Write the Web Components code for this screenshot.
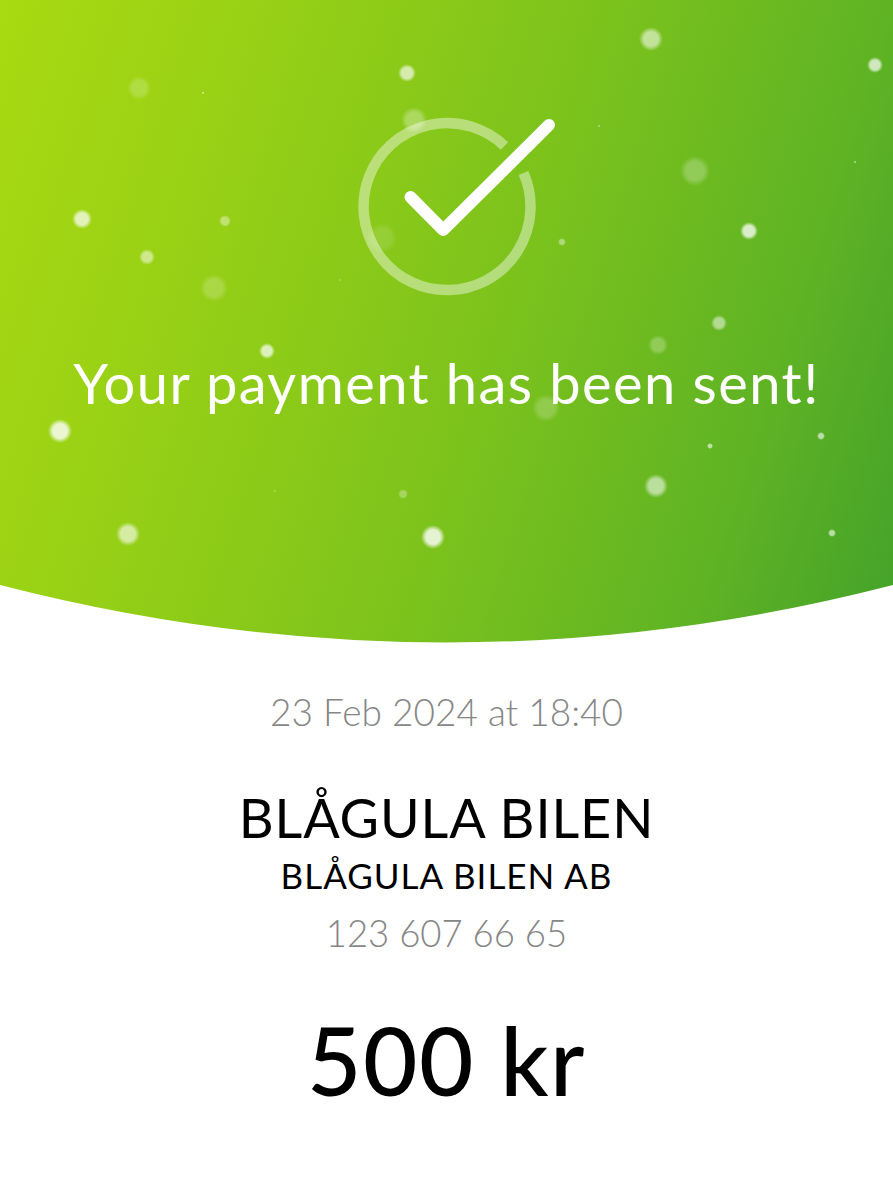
<!DOCTYPE html>
<html>
<head>
<meta charset="utf-8">
<title>Payment sent</title>
<style>
    html, body
    {
        margin: 0;
        padding: 0;
        background: #fff;
    }
</style>
</head>
<body>
<payment-receipt>
    <success-hero>Your payment has been sent!</success-hero>
    <payment-details
        date="23 Feb 2024 at 18:40"
        name="BLÅGULA BILEN"
        company="BLÅGULA BILEN AB"
        number="123 607 66 65"
        amount="500 kr"></payment-details>
</payment-receipt>

<script>
const receiptTemplate = document.createElement('template');
receiptTemplate.innerHTML = `
    <style>
        :host
        {
            display: flex;
            flex-direction: column;
            width: 893px;
            height: 1200px;
            overflow: hidden;
            background: #fff;
            font-family: Lato, "Open Sans", sans-serif;
        }
    </style>
    <slot></slot>
`;

class PaymentReceipt extends HTMLElement
{
    constructor()
    {
        super();
        this.attachShadow({mode: 'open'}).appendChild(receiptTemplate.content.cloneNode(true));
    }
}

// x, y, radius, opacity of each snow flake, read off the screenshot
const FLAKES = [
    [651, 39, 12, .55], [407, 73, 9, .65], [139, 88, 12, .2], [414, 120, 13, .3],
    [82, 219, 10, .7], [225, 221, 6, .4], [147, 257, 8, .5], [214, 288, 14, .2],
    [695, 171, 15, .25], [749, 231, 9, .75], [875, 65, 8, .7], [382, 238, 15, .12],
    [562, 242, 4, .4], [267, 351, 8, .7], [719, 323, 8, .5], [658, 345, 10, .25],
    [60, 431, 12, .8], [546, 408, 14, .2], [710, 446, 3, .6], [821, 436, 4, .6],
    [656, 486, 12, .55], [403, 494, 5, .3], [128, 534, 12, .6], [433, 537, 12, .8],
    [832, 533, 4, .6], [275, 491, 1, .4], [203, 93, 1, .8], [599, 126, 1, .6],
    [855, 162, 1, .7], [340, 280, 1, .4]
];

class SnowFlakes extends HTMLElement
{
    constructor()
    {
        super();
        const dots = FLAKES.map(([x, y, r, a]) =>
            `<i style="left:${x - r}px;top:${y - r}px;width:${2 * r}px;height:${2 * r}px;opacity:${a}"></i>`).join('');
        this.attachShadow({mode: 'open'}).innerHTML = `
            <style>
                :host
                {
                    position: absolute;
                    inset: 0;
                    display: block;
                }
                i
                {
                    position: absolute;
                    border-radius: 50%;
                    background: radial-gradient(circle closest-side, #fff 0, #fff 60%, #fff0 100%);
                }
            </style>
            ${dots}
        `;
    }
}

const heroTemplate = document.createElement('template');
heroTemplate.innerHTML = `
    <style>
        :host
        {
            position: relative;
            display: flex;
            flex-direction: column;
            align-items: center;
            flex: none;
            box-sizing: border-box;
            height: 643px;
            padding-top: 110px;
            color: #fff;
            background: linear-gradient(108deg, #a9da11 0%, #95cf16 27%, #7dc31c 54%, #5fb324 81%, #44a22a 100%);
            clip-path: path('M0 0H893V585Q446.5 700 0 585Z');
        }
        svg
        {
            position: relative;
            display: block;
            width: 220px;
            height: 200px;
        }
        h1
        {
            position: relative;
            margin: 38px 0 0;
            font-size: 56px;
            line-height: 70px;
            font-weight: 400;
            letter-spacing: 1.45px;
            white-space: nowrap;
        }
    </style>
    <snow-flakes></snow-flakes>
    <svg viewBox="0 0 220 200" fill="none">
        <path d="M167.500 36A83.500 83.500 0 1 0 186.500 63" stroke="#fff" stroke-opacity=".42" stroke-width="10.500"/>
        <path d="M73.500 87L106.200 120L212 15" stroke="#fff" stroke-width="12" stroke-linecap="round" stroke-linejoin="round"/>
    </svg>
    <h1><slot></slot></h1>
`;

class SuccessHero extends HTMLElement
{
    constructor()
    {
        super();
        this.attachShadow({mode: 'open'}).appendChild(heroTemplate.content.cloneNode(true));
    }
}

const detailsTemplate = document.createElement('template');
detailsTemplate.innerHTML = `
    <style>
        :host
        {
            display: flex;
            flex-direction: column;
            align-items: center;
            padding-top: 47px;
            white-space: nowrap;
        }
        .date, .number
        {
            color: #868686;
            font-size: 37px;
            line-height: 44px;
            font-weight: 300;
        }
        .name
        {
            margin-top: 53px;
            color: #000;
            font-size: 54px;
            line-height: 62px;
            font-weight: 400;
            letter-spacing: .9px;
        }
        .company
        {
            margin-top: 5px;
            color: #000;
            font-size: 35px;
            line-height: 42px;
            font-weight: 400;
            letter-spacing: 1px;
        }
        .number
        {
            margin-top: 15px;
            font-size: 36.500px;
        }
        .amount
        {
            margin-top: 52px;
            color: #000;
            font-size: 94px;
            line-height: 106px;
            font-weight: 500;
            letter-spacing: 1.500px;
        }
    </style>
    <div class="date"></div>
    <div class="name"></div>
    <div class="company"></div>
    <div class="number"></div>
    <div class="amount"></div>
`;

class PaymentDetails extends HTMLElement
{
    constructor()
    {
        super();
        this.attachShadow({mode: 'open'}).appendChild(detailsTemplate.content.cloneNode(true));
    }

    connectedCallback()
    {
        ['date', 'name', 'company', 'number', 'amount'].forEach(key =>
        {
            this.shadowRoot.querySelector(`.${key}`).textContent = this.getAttribute(key);
        });
    }
}

customElements.define('snow-flakes', SnowFlakes);
customElements.define('success-hero', SuccessHero);
customElements.define('payment-details', PaymentDetails);
customElements.define('payment-receipt', PaymentReceipt);
</script>
</body>
</html>
